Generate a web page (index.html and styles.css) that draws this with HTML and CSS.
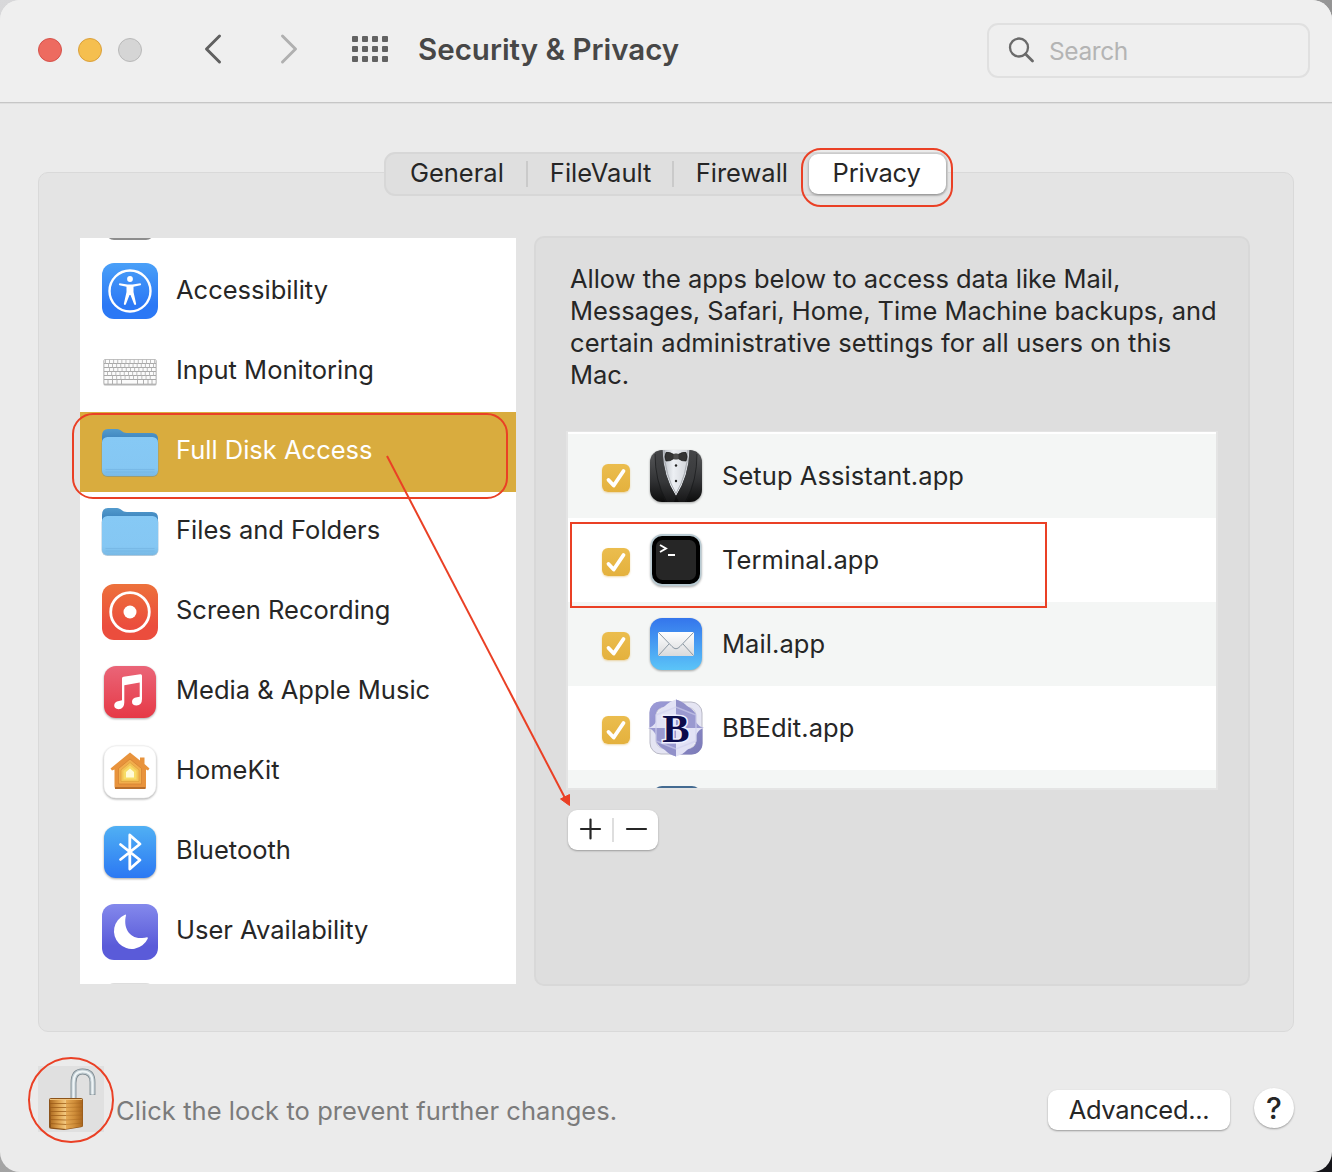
FILE: index.html
```html
<!DOCTYPE html>
<html lang="en">
<head>
    <meta charset="UTF-8">
    <meta name="viewport" content="width=device-width, initial-scale=1.0">
    <title>Security &amp; Privacy</title>
    <link rel="stylesheet" href="styles.css">
</head>
<body>
    <div class="window">
        <header class="titlebar">
            <div class="lights">
                <span class="light red"></span>
                <span class="light yellow"></span>
                <span class="light gray"></span>
            </div>
            <svg class="nav-back" width="20" height="32" viewBox="0 0 20 32"><path d="M16.500 3L3.500 16L16.500 29" fill="none" stroke="#606060" stroke-width="3" stroke-linecap="round" stroke-linejoin="round"/></svg>
            <svg class="nav-forward" width="20" height="32" viewBox="0 0 20 32"><path d="M3.500 3L16.500 16L3.500 29" fill="none" stroke="#b0b0b0" stroke-width="3" stroke-linecap="round" stroke-linejoin="round"/></svg>
            <div class="grid-icon">
                <i></i><i></i><i></i><i></i>
                <i></i><i></i><i></i><i></i>
                <i></i><i></i><i></i><i></i>
            </div>
            <h1>Security &amp; Privacy</h1>
            <div class="search">
                <svg width="28" height="28" viewBox="0 0 28 28"><circle cx="11" cy="11.500" r="9" fill="none" stroke="#6a6a6a" stroke-width="2.300"/><path d="M17.500 18L24.500 25" stroke="#6a6a6a" stroke-width="2.800" stroke-linecap="round"/></svg>
                <span>Search</span>
            </div>
        </header>

        <main class="content">
            <nav class="tabs">
                <span class="tab general">General</span>
                <span class="tab filevault">FileVault</span>
                <span class="tab firewall">Firewall</span>
                <span class="tab active">Privacy</span>
            </nav>

            <section class="panel">
                <ul class="sidebar">
                    <li class="cut-top"><span class="sliver"></span></li>
                    <li>
                        <svg class="icon" viewBox="0 0 60 60">
                            <defs><linearGradient id="blue" x2="0" y2="1"><stop offset="0" stop-color="#4aa0f8"/><stop offset=".75" stop-color="#2b78f5"/></linearGradient></defs>
                            <rect x="2" y="1" width="56" height="56" rx="12" fill="url(#blue)"/>
                            <circle cx="30" cy="29" r="20.500" fill="none" stroke="#fff" stroke-width="2.400"/>
                            <circle cx="30" cy="17" r="2.900" fill="#fff"/>
                            <path d="M19.500 21.200L27.500 22.500H32.500L40.500 21.200Q41.800 22.500 40.500 23.300L33.500 24.800V30L36.200 42Q35.500 43.600 34.200 42.600L30.500 33H29.500L25.800 42.600Q24.500 43.600 23.800 42L26.500 30V24.800L19.500 23.300Q18.200 22.500 19.500 21.200Z" fill="#fff"/>
                        </svg>
                        <span>Accessibility</span>
                    </li>
                    <li>
                        <svg class="icon" viewBox="0 0 60 60">
                            <rect x="3.500" y="17.500" width="53" height="26" rx="1.500" fill="#b4b4b4"/>
                            <rect x="4" y="17.500" width="52" height="24.500" rx="1" fill="#fbfbfb" stroke="#b5b5b5" stroke-width=".8"/>
                            <path d="M4 21.500H56M4 25.500H56M4 29.500H56M4 33.500H56M4 37.500H56" stroke="#a8a8a8" stroke-width="1"/>
                            <path d="M5 19.500H56M8 23.500H56" stroke="#b5b5b5" stroke-width="4" stroke-dasharray=".9 3.200"/>
                            <path d="M9 27.500H54M7 31.500H54M12 35.500H52" stroke="#b5b5b5" stroke-width="4" stroke-dasharray=".9 3.300"/>
                            <path d="M8 37.500V42M12.500 37.500V42M17 37.500V42M21.500 37.500V42M37.500 37.500V42M43.500 37.500V42M48 37.500V42M52 37.500V42" stroke="#a8a8a8" stroke-width=".9"/>
                        </svg>
                        <span>Input Monitoring</span>
                    </li>
                    <li class="selected">
                        <svg class="icon" viewBox="0 0 60 60">
                            <defs>
                                <linearGradient id="folderBack" x2="0" y2="1"><stop offset="0" stop-color="#539bcd"/><stop offset=".4" stop-color="#397fba"/></linearGradient>
                                <linearGradient id="folderFront" x2="0" y2="1"><stop offset="0" stop-color="#86c9f5"/><stop offset=".78" stop-color="#85c7f3"/><stop offset="1" stop-color="#78b9e5"/></linearGradient>
                                <g id="folder">
                                    <path d="M2 14Q2 7 8 7H17C21 7 22 11 27 11H52Q58 11 58 17V40H2Z" fill="url(#folderBack)"/>
                                    <rect x="1.500" y="15.500" width="57" height="39.500" rx="6" fill="#5187ad" opacity=".45"/>
                                    <rect x="2" y="15" width="56" height="39" rx="5.500" fill="url(#folderFront)"/>
                                    <path d="M5.500 47.500H54.500M5.500 50H54.500" stroke="#74b5e2" stroke-width=".7"/>
                                </g>
                            </defs>
                            <use href="#folder"/>
                        </svg>
                        <span>Full Disk Access</span>
                    </li>
                    <li>
                        <svg class="icon" viewBox="0 0 60 60"><use href="#folder" y="-1"/></svg>
                        <span>Files and Folders</span>
                    </li>
                    <li>
                        <svg class="icon" viewBox="0 0 60 60">
                            <defs><linearGradient id="orange" x2="0" y2="1"><stop offset="0" stop-color="#ed713b"/><stop offset=".75" stop-color="#eb4d3d"/></linearGradient></defs>
                            <rect x="2" y="2" width="56" height="56" rx="12" fill="url(#orange)"/>
                            <circle cx="30" cy="30" r="19.300" fill="none" stroke="#fff" stroke-width="2.800"/>
                            <circle cx="30" cy="30" r="6.500" fill="#fff"/>
                        </svg>
                        <span>Screen Recording</span>
                    </li>
                    <li>
                        <svg class="icon shadow" viewBox="0 0 60 60">
                            <defs><linearGradient id="pink" x2="0" y2="1"><stop offset="0" stop-color="#ea6578"/><stop offset="1" stop-color="#e63946"/></linearGradient></defs>
                            <rect x="4" y="4" width="52" height="52" rx="12" fill="url(#pink)"/>
                            <path d="M22 16.500Q22 15 23.500 14.700L40.300 12.200Q42 12 42 13.700V37Q42 43 36.500 43.500Q32 43.500 32 39.700Q32 36 37 35.300L39.700 34.700V20.500L24.300 23.300V40.500Q24.300 47 18.500 47.200Q14.200 47 14.200 43.300Q14.300 39.700 19 39L22 38.300Z" fill="#fff"/>
                        </svg>
                        <span>Media &amp; Apple Music</span>
                    </li>
                    <li>
                        <svg class="icon shadow" viewBox="0 0 60 60">
                            <rect x="4" y="4" width="52" height="52" rx="12" fill="#fff" stroke="#eee" stroke-width=".6"/>
                            <path d="M30 10.500L40 18.500V15.500H44.500V22L49.500 26.500L48 28.500L46 27.500V44.500Q46 47 43.500 47H16.500Q14.500 47 14.500 44.500V27.500L12 28.500L10.500 26.500Z" fill="#e8933c"/>
                            <path d="M15 46H45.500" stroke="#b86e2c" stroke-width="2"/>
                            <path d="M30 17L41.500 26.500V42H18.500V26.500Z" fill="#f2ad4c" stroke="#d58432" stroke-width=".8"/>
                            <path d="M30 20.500L39 28V39.500H21V28Z" fill="#f4c456" stroke="#dc9f3b" stroke-width=".7"/>
                            <path d="M30 23.500L36.500 29V37.500H23.500V29Z" fill="#f7dc66"/>
                            <path d="M30 26.500L34 30V35.500H26V30Z" fill="#fffbd7"/>
                        </svg>
                        <span>HomeKit</span>
                    </li>
                    <li>
                        <svg class="icon shadow" viewBox="0 0 60 60">
                            <defs><linearGradient id="sky" x2="0" y2="1"><stop offset="0" stop-color="#50b0f4"/><stop offset="1" stop-color="#2b78f3"/></linearGradient></defs>
                            <rect x="4" y="4" width="52" height="52" rx="12" fill="url(#sky)"/>
                            <path d="M20.500 22.500L40 38L29.800 47V13L40 22L20.500 37.500" fill="none" stroke="#fff" stroke-width="2.800" stroke-linecap="round" stroke-linejoin="round"/>
                        </svg>
                        <span>Bluetooth</span>
                    </li>
                    <li>
                        <svg class="icon" viewBox="0 0 60 60">
                            <defs><linearGradient id="purple" x2="0" y2="1"><stop offset="0" stop-color="#8489ec"/><stop offset=".75" stop-color="#5a5bd9"/></linearGradient></defs>
                            <rect x="2" y="2" width="56" height="56" rx="12" fill="url(#purple)"/>
                            <path d="M26 13.500C23 25 29 37 42 36Q45 36 47 35.200Q48.300 35 47.700 36.700A17.700 17.700 0 1 1 24.500 13Q26 12 26 13.500Z" fill="#fff"/>
                        </svg>
                        <span>User Availability</span>
                    </li>
                    <li class="cut-bottom"><span class="sliver"></span></li>
                </ul>

                <div class="pane">
                    <p>Allow the apps below to access data like Mail,<br>Messages, Safari, Home, Time Machine backups, and<br><span class="wide">certain administrative settings for all users on this</span><br>Mac.</p>

                    <ul class="apps">
                        <li>
                            <span class="checkbox"><svg viewBox="0 0 28 28"><path d="M6.500 16L11.700 21.500L21.500 7" /></svg></span>
                            <svg class="app-icon shadow" viewBox="0 0 60 60">
                                <defs>
                                    <linearGradient id="suit" x2="0" y2="1"><stop offset="0" stop-color="#5a5b5d"/><stop offset=".6" stop-color="#303133"/><stop offset="1" stop-color="#0c0c0c"/></linearGradient>
                                    <linearGradient id="lapel" x2="0" y2="1"><stop offset="0" stop-color="#454648"/><stop offset=".6" stop-color="#37383a"/><stop offset="1" stop-color="#161617"/></linearGradient>
                                    <linearGradient id="shirt"><stop offset="0" stop-color="#b9bdc4"/><stop offset=".4" stop-color="#edf0f4"/><stop offset="1" stop-color="#ced1d6"/></linearGradient>
                                </defs>
                                <rect x="4" y="4" width="52" height="52" rx="12" fill="url(#suit)"/>
                                <path d="M16.500 4H43.500Q43 30 30 50Q17 30 16.500 4Z" fill="url(#shirt)"/>
                                <path d="M16.500 4Q17 30 30 50L28 56H21Q9 32 9 6ZM43.500 4Q43 30 30 50L33 56H39Q51 32 51 6Z" fill="url(#lapel)"/>
                                <path d="M9 8Q9 34 20 56M51 8Q51 34 40 56" fill="none" stroke="#17181a" stroke-width=".7"/>
                                <path d="M18 4Q19 29 30 47.500Q41 29 42 4" fill="none" stroke="#9da1a6" stroke-width=".8"/>
                                <path d="M20 6.500Q23 5.500 28 8.500H32Q37 5.500 40 6.500Q42 11 40 15Q36 15.500 32 12.500H28Q24 15.500 20 15Q18 11 20 6.500Z" fill="#343434" stroke="#191919" stroke-width=".7"/>
                                <rect x="27.500" y="7.500" width="5" height="6" rx="1.500" fill="#4d4d4d"/>
                                <circle cx="30" cy="19.500" r="1.200" fill="#222"/><circle cx="30" cy="35" r="1.200" fill="#222"/>
                            </svg>
                            <span>Setup Assistant.app</span>
                        </li>
                        <li>
                            <span class="checkbox"><svg viewBox="0 0 28 28"><path d="M6.500 16L11.700 21.500L21.500 7" /></svg></span>
                            <svg class="app-icon shadow" viewBox="0 0 60 60">
                                <rect x="4.500" y="4" width="51" height="52" rx="12" fill="#b9cbd3"/>
                                <rect x="6" y="6" width="48" height="48" rx="10" fill="#000"/>
                                <rect x="10" y="10" width="40" height="40" rx="6.500" fill="#262626"/>
                                <path d="M14 15L20 18.500L14 22M22 25H29" fill="none" stroke="#fff" stroke-width="1.900"/>
                            </svg>
                            <span>Terminal.app</span>
                        </li>
                        <li>
                            <span class="checkbox"><svg viewBox="0 0 28 28"><path d="M6.500 16L11.700 21.500L21.500 7" /></svg></span>
                            <svg class="app-icon shadow" viewBox="0 0 60 60">
                                <defs>
                                    <linearGradient id="mail" x2="0" y2="1"><stop offset="0" stop-color="#3475ec"/><stop offset="1" stop-color="#5bc4f8"/></linearGradient>
                                    <linearGradient id="letter" x2="0" y2="1"><stop offset="0" stop-color="#fff"/><stop offset="1" stop-color="#d9dadc"/></linearGradient>
                                </defs>
                                <rect x="4" y="4" width="52" height="52" rx="12" fill="url(#mail)"/>
                                <rect x="12" y="18" width="36" height="24" rx="1.500" fill="url(#letter)"/>
                                <path d="M12.500 18.500L26 32.500Q30 37 34 32.500L47.500 18.500M12.500 41.500L23 30M47.500 41.500L37 30" fill="none" stroke="#8b98a3" stroke-width="1"/>
                            </svg>
                            <span>Mail.app</span>
                        </li>
                        <li>
                            <span class="checkbox"><svg viewBox="0 0 28 28"><path d="M6.500 16L11.700 21.500L21.500 7" /></svg></span>
                            <svg class="app-icon bbedit" viewBox="0 0 60 60">
                                <defs>
                                    <clipPath id="darkFrame"><path d="M0 0H30V30H0ZM30 30H60V60H30Z"/></clipPath>
                                    <clipPath id="darkShield"><path d="M30 0H60V30H30ZM0 30H30V60H0Z"/></clipPath>
                                    <linearGradient id="violet" x2="1" y2="1"><stop offset="0" stop-color="#9d9cd8"/><stop offset="1" stop-color="#7c7bb8"/></linearGradient>
                                    <path id="shield" d="M30 1.500Q37 3.500 41 8Q48 12 50 17V24Q53 29 58 30Q53 31 50 37V43Q48 48 41 52Q37 56.500 30 58.500Q23 56.500 19 52Q12 48 10 43V37Q7 31 2 30Q7 29 10 24V17Q12 12 19 8Q23 3.500 30 1.500Z"/>
                                </defs>
                                <rect x="4" y="4" width="52" height="52" rx="11" fill="#e5e5f3" stroke="#b9b9c6" stroke-width="1"/>
                                <rect x="3.500" y="3.500" width="53" height="53" rx="11" fill="url(#violet)" clip-path="url(#darkFrame)"/>
                                <rect x="10" y="9.500" width="40" height="41" rx="8" fill="#fff" stroke="#c5c5d6" stroke-width="1"/>
                                <use href="#shield" fill="#e2e2f5"/>
                                <use href="#shield" fill="#9a99d0" clip-path="url(#darkShield)"/>
                                <path d="M30 1.500Q37 3.500 41 8Q48 12 50 17L30 9ZM10 43Q12 48 19 52Q23 56.500 30 58.500V51Z" fill="#8886c2" opacity=".45"/>
                                <path d="M10 17L30 9L50 17V43L30 51L10 43Z" fill="none" stroke="#d0d0ee" stroke-width="1.600" opacity=".6"/>
                                <text x="30" y="43.500" text-anchor="middle">B</text>
                            </svg>
                            <span>BBEdit.app</span>
                        </li>
                        <li class="cut-app"><span></span></li>
                    </ul>

                    <div class="add-remove">
                        <svg width="44" height="40" viewBox="0 0 44 40"><path d="M13 19H32M22.500 9.500V28.500" stroke="#262626" stroke-width="2.200" stroke-linecap="round"/></svg>
                        <i></i>
                        <svg width="44" height="40" viewBox="0 0 44 40"><path d="M13 19H32" stroke="#262626" stroke-width="2.200" stroke-linecap="round"/></svg>
                    </div>
                </div>
            </section>
        </main>

        <footer class="footer">
            <div class="lock">
                <svg width="66" height="66" viewBox="0 0 66 66">
                    <defs>
                        <linearGradient id="brassLeft"><stop offset="0" stop-color="#ad6a20"/><stop offset=".55" stop-color="#dfa34f"/><stop offset="1" stop-color="#f3ca83"/></linearGradient>
                        <linearGradient id="brassRight"><stop offset="0" stop-color="#e6aa55"/><stop offset=".5" stop-color="#d08e3a"/><stop offset="1" stop-color="#ab671e"/></linearGradient>
                    </defs>
                    <path d="M35.500 35V17Q35.500 5.500 44.500 5.500Q54.500 5.500 54.500 16V29" fill="none" stroke="#77848b" stroke-width="5.800"/>
                    <path d="M35.500 35V17Q35.500 5.500 44.500 5.500Q54.500 5.500 54.500 16V28.500" fill="none" stroke="#bcc8ce" stroke-width="4.400"/>
                    <path d="M35.500 35V17Q35.500 5.500 44.500 5.500Q54.500 5.500 54.500 16V28.500" fill="none" stroke="#eef4f6" stroke-width="2.200"/>
                    <path d="M11 34Q11 32 13 32H43Q45 32 45 34V59.500Q45 61 43 61.300L26 64L13 62.700Q11 62.500 11 61Z" fill="#8c531a"/>
                    <path d="M12 34H28V63L13 61.500Z" fill="url(#brassLeft)"/>
                    <path d="M28 34H44.500V60.500L28 63Z" fill="url(#brassRight)"/>
                    <path d="M12 33.500H44" stroke="#efc27c" stroke-width="1.200"/>
                    <path d="M12 37.500H28M12 41.500H28M12 45.500H28M12 49.500H28M12 53.500L28 54M12 57.500L28 58.500" fill="none" stroke="#9b5b18" stroke-width="1" opacity=".75"/>
                    <path d="M28 37.500L44.500 37M28 41.500L44.500 41M28 45.500L44.500 45M28 49.500L44.500 49M28 54L44.500 53M28 58.500L44.500 57" fill="none" stroke="#9b5b18" stroke-width="1" opacity=".35"/>
                </svg>
            </div>
            <span class="lock-text">Click the lock to prevent further changes.</span>
            <button class="advanced">Advanced...</button>
            <button class="help">?</button>
        </footer>

        <!-- red markup drawn over the window -->
        <svg class="marks" width="1332" height="1172" viewBox="0 0 1332 1172">
            <rect x="802" y="149" width="150" height="57" rx="19"/>
            <rect x="73" y="414" width="434" height="84" rx="20"/>
            <rect x="571" y="523" width="475" height="84"/>
            <circle cx="71" cy="1100" r="42"/>
            <path d="M387 456L565 798"/>
            <path class="head" d="M569.500 805.500L560.500 799L569.500 794.500Z"/>
        </svg>
    </div>
</body>
</html>
```

FILE: styles.css
```css
* {
    margin: 0;
    padding: 0;
    box-sizing: border-box;
}

body {
    width: 1332px;
    height: 1172px;
    overflow: hidden;
    background: linear-gradient(135deg, #d8d8da 0%, #a0a0a0 50%, #15151a 90%);
    font-family: Inter, "Liberation Sans", sans-serif;
    font-size: 25.5px;
    color: #262626;
}

ul {
    list-style: none;
}

.window {
    position: relative;
    width: 1332px;
    height: 1172px;
    display: flex;
    flex-direction: column;
    background: #ebebeb;
    border-radius: 20px;
    overflow: hidden;
}

.titlebar {
    height: 103px;
    flex: none;
    display: flex;
    align-items: center;
    padding: 0 23px 3px 38px;
    background: #efefef;
    border-bottom: 1px solid #c6c6c6;
    box-shadow: 0 1px 0 #dfdfdf;
}

.lights {
    display: flex;
    gap: 16px;
    margin-right: 61px;
}

.light {
    width: 24px;
    height: 24px;
    border-radius: 50%;
    border: 1px solid #d6524b;
    background: #ed6b60;
}

.light.yellow {
    border-color: #dba03b;
    background: #f5bf4f;
}

.light.gray {
    border-color: #b9b9b9;
    background: #d5d5d5;
}

.nav-back {
    margin: 0 56px 2px 0;
}

.nav-forward {
    margin: 0 53px 2px 0;
}

.grid-icon {
    display: grid;
    grid-template-columns: repeat(4, 6px);
    gap: 4px;
    margin: 0 30px 1px 0;
}

.grid-icon i {
    width: 6px;
    height: 6px;
    border-radius: 1px;
    background: #626262;
}

h1 {
    margin-bottom: 2px;
    font-size: 29.5px;
    font-weight: 600;
    letter-spacing: 0;
    color: #474747;
}

.search {
    width: 323px;
    height: 55px;
    margin: 1px -1px 0 auto;
    padding-left: 19px;
    display: flex;
    align-items: center;
    gap: 13px;
    border: 2px solid #e0e0e0;
    border-radius: 11px;
    color: #b4b4b4;
    font-size: 24.5px;
    letter-spacing: -0.4px;
}

.search span {
    margin-top: 2px;
}

.content {
    height: 929px;
    padding: 49px 38px 0;
}

.tabs {
    position: relative;
    width: 564px;
    height: 44px;
    margin-left: 346px;
    display: flex;
    align-items: center;
    background: #dfdfdf;
    border: 2px solid #d7d7d7;
    border-radius: 11px;
}

.tab {
    height: 26px;
    line-height: 23px;
    text-align: center;
}

.general {
    width: 142px;
    padding-left: 2px;
    border-right: 2px solid #cacaca;
}

.filevault {
    width: 147px;
    padding-left: 1px;
    border-right: 2px solid #cacaca;
}

.firewall {
    width: 135px;
}

.tab.active {
    width: 137px;
    height: 40px;
    padding-right: 2px;
    line-height: 38px;
    letter-spacing: -0.2px;
    background: #fff;
    border-radius: 9px;
    box-shadow: 0 1px 3px rgba(0, 0, 0, 0.4);
}

.panel {
    height: 860px;
    margin-top: -24px;
    padding: 63px 43px 45px 41px;
    display: flex;
    gap: 18px;
    background: #e4e4e4;
    border: 1px solid #d9d9d9;
    border-radius: 10px;
}

.sidebar {
    width: 436px;
    height: 746px;
    margin-top: 2px;
    background: #fff;
    overflow: hidden;
}

.sidebar li {
    height: 80px;
    display: flex;
    align-items: center;
    padding-left: 20px;
}

.sidebar li > span {
    margin-top: -6px;
}

.sidebar li.selected {
    background: #d9ac3e;
    color: #fff;
}

.sidebar li.cut-top,
.sidebar li.cut-bottom {
    height: 14px;
    align-items: flex-start;
    padding-left: 26px;
}

.cut-top .sliver {
    width: 48px;
    height: 8px;
    background: #8d8d8d;
    border-radius: 0 0 14px 14px;
}

.sidebar .cut-bottom .sliver {
    width: 48px;
    height: 8px;
    margin-top: 11px;
    background: #ddd;
    border-radius: 14px 14px 0 0;
}

.icon,
.app-icon {
    width: 60px;
    height: 60px;
    flex: none;
    margin-right: 16px;
}

.shadow {
    filter: drop-shadow(0 1px 1px rgba(0, 0, 0, 0.35));
}

.pane {
    width: 716px;
    height: 750px;
    padding: 25px 32px 0;
    background: #dedede;
    border: 2px solid #d8d8d8;
    border-radius: 10px;
}

.pane p {
    padding-left: 2px;
    margin-bottom: 40px;
    line-height: 32px;
    letter-spacing: -0.03px;
    white-space: nowrap;
}

.pane .wide {
    letter-spacing: 0.08px;
}

.apps {
    width: 652px;
    height: 359px;
    margin-left: -2px;
    padding-top: 2px;
    background: #fff;
    border: 2px solid #e4e4e4;
    border-top-width: 1px;
    overflow: hidden;
}

.apps li {
    height: 84px;
    display: flex;
    align-items: center;
    padding-left: 34px;
    letter-spacing: 0.07px;
}

.apps li:nth-child(odd) {
    background: #f4f6f5;
}

.checkbox {
    width: 28px;
    height: 28px;
    margin: 4px 16px 0 0;
    border-radius: 6px;
    background: linear-gradient(#ebbd4e, #e4b13d);
    box-shadow: 0 1px 2px rgba(220, 160, 40, 0.4);
}

.checkbox svg {
    display: block;
    fill: none;
    stroke: #fff;
    stroke-width: 3.8;
    stroke-linecap: round;
    stroke-linejoin: round;
}

.app-icon + span {
    margin-top: -1px;
}

.bbedit text {
    font: bold 41px "Liberation Serif", serif;
    fill: #0c0c4b;
    stroke: #f0f0ff;
    stroke-width: 3px;
    paint-order: stroke;
}

.apps .cut-app {
    align-items: flex-start;
    padding: 16px 0 0 85px;
}

.cut-app span {
    width: 48px;
    height: 12px;
    background: #446b91;
    border-radius: 9px 9px 0 0;
}

.add-remove {
    width: 90px;
    height: 40px;
    margin-top: 20px;
    display: flex;
    align-items: center;
    background: #fff;
    border-radius: 9px;
    box-shadow: 0 1px 2px rgba(0, 0, 0, 0.3);
}

.add-remove i {
    width: 2px;
    height: 24px;
    background: #dedede;
}

.footer {
    height: 140px;
    display: flex;
    align-items: flex-start;
    padding: 34px 38px 0;
}

.lock {
    width: 66px;
    height: 66px;
    background: #e0e0e0;
}

.lock svg {
    display: block;
}

.lock-text {
    margin: 29px auto 0 12px;
    line-height: 32px;
    letter-spacing: 0.07px;
    color: #7b7b7b;
}

button {
    border: none;
    background: #fff;
    font-family: inherit;
    font-size: 25.5px;
    color: #262626;
    box-shadow: 0 1px 2px rgba(0, 0, 0, 0.35);
}

.advanced {
    width: 182px;
    height: 40px;
    margin: 24px 24px 0 0;
    padding-bottom: 2px;
    border-radius: 9px;
    letter-spacing: -0.3px;
}

.help {
    width: 40px;
    height: 40px;
    margin-top: 22px;
    border-radius: 50%;
    font-size: 30px;
    font-weight: 500;
    line-height: 40px;
}

.marks {
    position: absolute;
    top: 0;
    left: 0;
    fill: none;
    stroke: #ea4025;
    stroke-width: 2;
    pointer-events: none;
}

.marks .head {
    fill: #ea4025;
    stroke-width: 1;
}
```
